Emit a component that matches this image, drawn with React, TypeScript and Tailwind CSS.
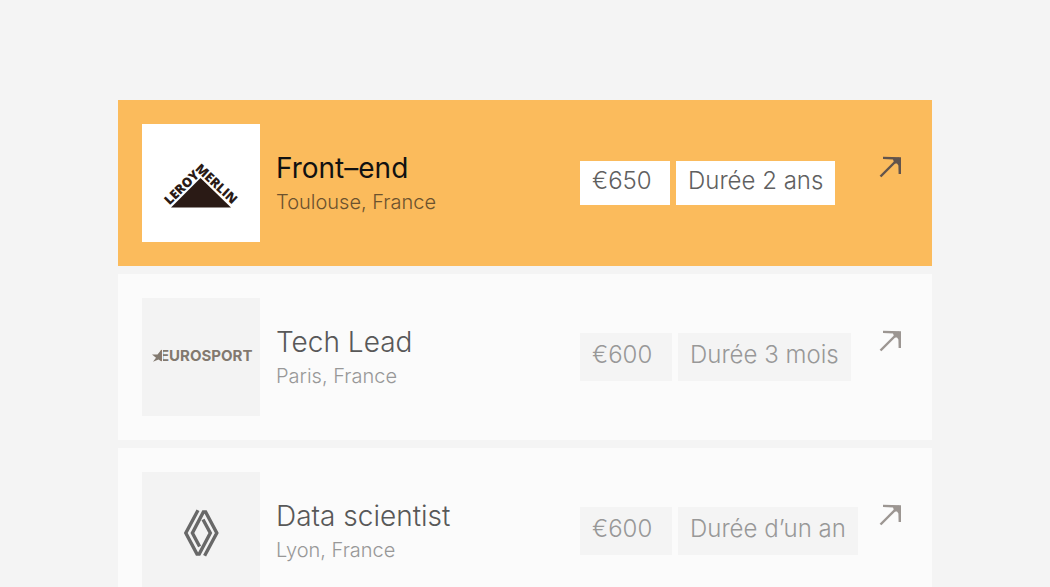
import type { ReactNode } from "react";
import clsx from "clsx";

type Job = {
  title: string;
  place: string;
  salary: string;
  duration: string;
  logo: ReactNode;
  active?: boolean;
};

function LeroyMerlinLogo() {
  return (
    <svg viewBox="0 0 118 118" className="w-full" role="img" aria-label="Leroy Merlin">
      <path d="M58.5 54 L89 83.5 H29 Z" fill="#2a1a15" />
      <g fill="#2a1a15" fontFamily="'Open Sans', sans-serif" fontWeight="800" fontSize="13">
        <text transform="translate(27.5 81.5) rotate(-44)">LEROY</text>
        <text transform="translate(52.5 45.5) rotate(43)">MERLIN</text>
      </g>
    </svg>
  );
}

function EurosportLogo() {
  return (
    <svg viewBox="0 0 118 118" className="w-full" role="img" aria-label="Eurosport">
      <text x="18" y="63" fill="#82796f" fontFamily="Inter, sans-serif" fontWeight="700" fontSize="15">
        EUROSPORT
      </text>
      <path d="M19.5 51.5 V63.5 L16.5 61.5 L11 63.8 L14 59.8 L10 56.6 L15.5 56.4 Z" fill="#82796f" />
      <path d="M20.5 51 V64" stroke="#f3f3f3" strokeWidth="1" />
    </svg>
  );
}

function RenaultLogo() {
  return (
    <svg viewBox="0 0 118 118" className="w-full" role="img" aria-label="Renault">
      <g fill="none" stroke="#686868" strokeWidth="3.4">
        <path d="M56 38.2 L43.8 61 L55 82 H57.2 L68.3 61 L61 47.5" />
        <path d="M62.6 83.8 L74.8 61 L63.6 40 H61.4 L50.4 61 L57.6 74.5" />
      </g>
    </svg>
  );
}

function ArrowIcon() {
  return (
    <svg viewBox="0 0 36 36" className="h-9 w-9">
      <path d="M8.5 28.5 L27 10" fill="none" stroke="currentColor" strokeWidth="2.4" />
      <path d="M11 8.8 L29 9.2 V26 H26.6 L26.4 17.5 L25 15.5 H22.5 L21 11.6 L11 11 Z" fill="currentColor" />
    </svg>
  );
}

const jobs: Job[] = [
  {
    title: "Front–end",
    place: "Toulouse, France",
    salary: "€650",
    duration: "Durée 2 ans",
    logo: <LeroyMerlinLogo />,
    active: true,
  },
  {
    title: "Tech Lead",
    place: "Paris, France",
    salary: "€600",
    duration: "Durée 3 mois",
    logo: <EurosportLogo />,
  },
  {
    title: "Data scientist",
    place: "Lyon, France",
    salary: "€600",
    duration: "Durée d’un an",
    logo: <RenaultLogo />,
  },
];

function Tag({ children, active }: { children: ReactNode; active?: boolean }) {
  return (
    <span
      className={clsx(
        "px-3 text-2xl leading-8 font-light whitespace-nowrap",
        active
          ? "min-w-[90px] bg-white pt-1 pb-2 text-[#606060]"
          : "min-w-[92px] bg-[#f4f4f4] pt-[6px] pb-[10px] text-[#989898]"
      )}
    >
      {children}
    </span>
  );
}

function JobRow({ job }: { job: Job }) {
  return (
    <li className={clsx("flex items-center p-6", job.active ? "bg-[#fbbb5c]" : "bg-[#fbfbfb]")}>
      <div className={clsx("mr-4 w-[118px] shrink-0", job.active ? "bg-white" : "bg-[#f3f3f3]")}>{job.logo}</div>
      <div className="flex-1">
        <h2 className={clsx("mb-[2px] text-[28px] leading-9", job.active ? "text-[#111111]" : "font-light text-[#585858]")}>
          {job.title}
        </h2>
        <p className={clsx("text-xl leading-7 font-light", job.active ? "text-[#6c522e]" : "text-[#989898]")}>
          {job.place}
        </p>
      </div>
      <div className="flex w-[328px] shrink-0 items-center justify-between">
        <div className="flex gap-[6px]">
          <Tag active={job.active}>{job.salary}</Tag>
          <Tag active={job.active}>{job.duration}</Tag>
        </div>
        <a
          href="#"
          aria-label={job.title}
          className={clsx("mb-[34px]", job.active ? "text-[#62544c]" : "text-[#9c9692]")}
        >
          <ArrowIcon />
        </a>
      </div>
    </li>
  );
}

export default function App() {
  return (
    <main className="h-screen overflow-hidden bg-[#f4f4f4] px-[118px] pt-[100px] font-['Inter',sans-serif]">
      <ul className="flex flex-col gap-2">
        {jobs.map((job) => (
          <JobRow key={job.title} job={job} />
        ))}
      </ul>
    </main>
  );
}
